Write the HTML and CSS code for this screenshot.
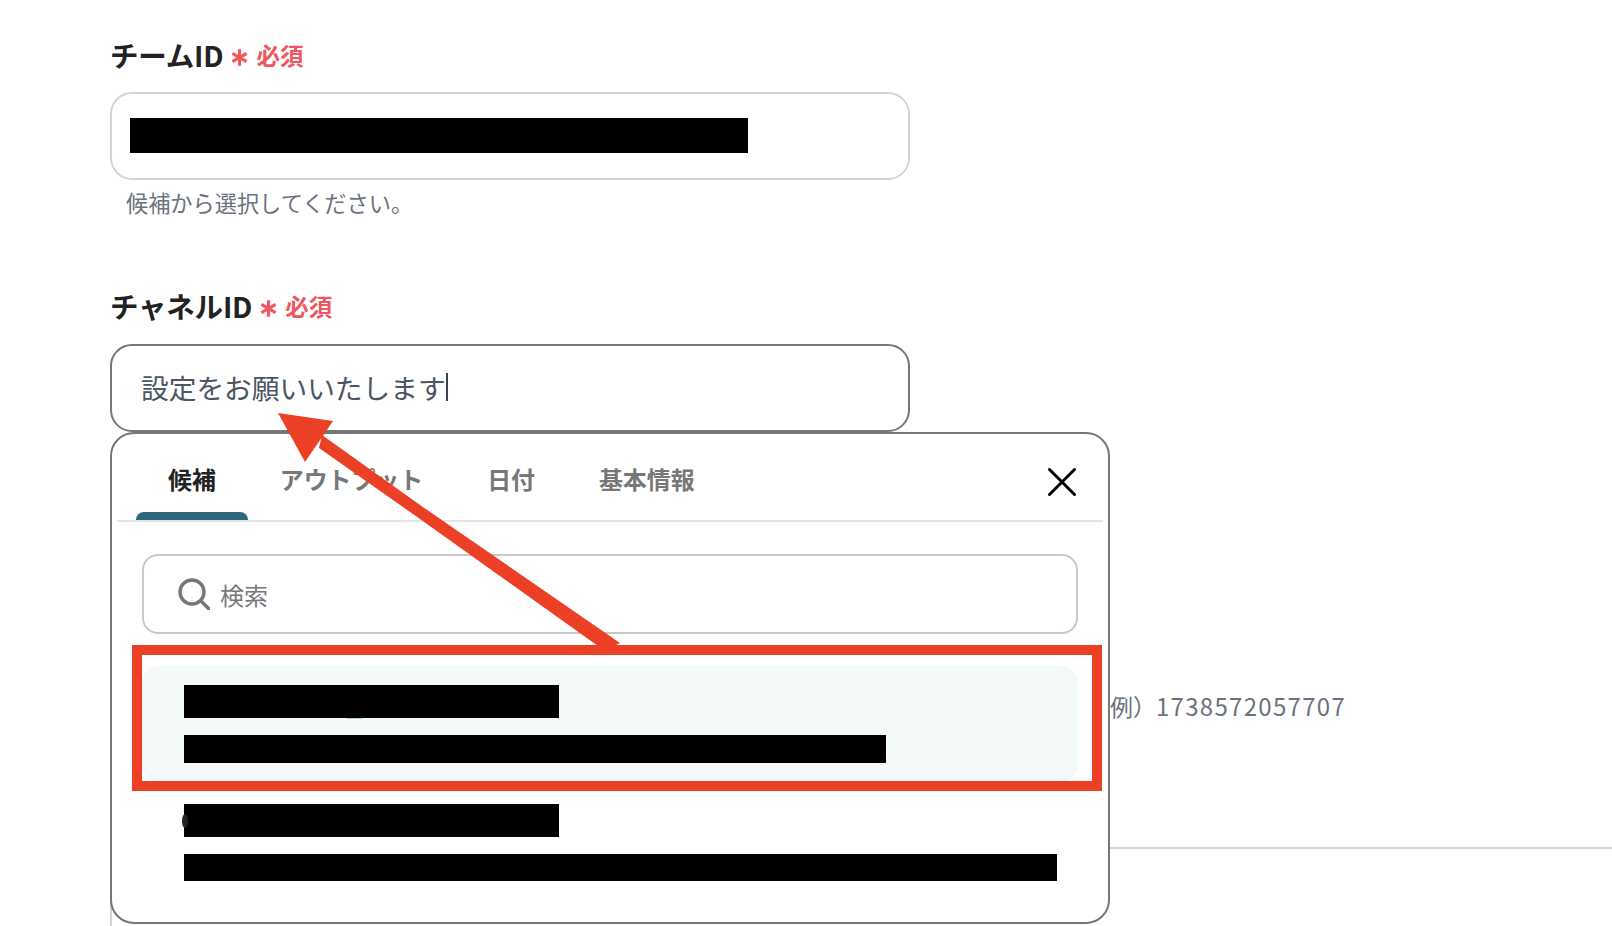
FILE: index.html
```html
<!DOCTYPE html>
<html lang="ja">
<head>
<meta charset="utf-8">
<title>チャネルID</title>
<link rel="stylesheet" href="styles.css">
</head>
<body>
<main class="page">
  <section class="field">
    <div class="label"><span>チームID</span>
      <svg class="star" viewBox="0 0 16 16"><path d="M8 1v14M2 4.5l12 7M14 4.5l-12 7"/></svg>
      <span class="req">必須</span></div>
    <div class="box box-light"><div class="bar bar-team"></div></div>
    <p class="hint">候補から選択してください。</p>
  </section>
  <section class="field field-channel">
    <div class="label"><span>チャネルID</span>
      <svg class="star" viewBox="0 0 16 16"><path d="M8 1v14M2 4.5l12 7M14 4.5l-12 7"/></svg>
      <span class="req">必須</span></div>
    <div class="box box-dark"><span class="typed">設定をお願いいたします</span><i class="caret"></i></div>
  </section>
  <p class="example">例）<span class="digits">1738572057707</span></p>
  <hr class="rule">
  <div class="box box-next"></div>

  <div class="popup">
    <div class="tabs">
      <div class="tab tab-on">候補</div>
      <div class="tab">アウトプット</div>
      <div class="tab">日付</div>
      <div class="tab">基本情報</div>
      <svg class="close" viewBox="0 0 28 28"><path d="M1.5 1.5l25 25M26.5 1.5l-25 25"/></svg>
    </div>
    <div class="search">
      <svg class="glass" viewBox="0 0 32 32"><circle cx="14" cy="14" r="12"/><path d="M23 23l8 8"/></svg>
      <span>検索</span>
    </div>
    <div class="option option-on">
      <div class="bar bar-title bar-under"></div>
      <div class="bar bar-sub-a"></div>
    </div>
    <div class="option">
      <div class="bar bar-title bar-curl"></div>
      <div class="bar bar-sub-b"></div>
    </div>
  </div>

  <svg class="marks" viewBox="0 0 1612 926">
    <polygon points="420,505 620,643 605,651 420,519 319,448 322,435"/>
    <polygon points="278,413 333,421 305,462"/>
    <rect x="137" y="650" width="960" height="136"/>
  </svg>
</main>
</body>
</html>
```
FILE: styles.css
```css
* { box-sizing: border-box; }
html, body { margin: 0; background: #fff; }
body { font-family: "Noto Sans CJK JP", "Liberation Sans", sans-serif; }

.page {
  position: relative;
  width: 1612px;
  height: 926px;
  overflow: hidden;
  padding: 34px 0 0 110px;
}

.field-channel { margin-top: 66px; }

.label {
  display: flex;
  align-items: center;
  height: 40px;
  font-size: 28.5px;
  font-weight: 700;
  color: #222;
  letter-spacing: -0.2px;
}
.star {
  width: 19px;
  height: 19px;
  margin: 7px 7px 0 7px;
  fill: none;
  stroke: #f0565f;
  stroke-width: 2.6;
}
.req { font-size: 23.5px; color: #f0565f; letter-spacing: 0; margin-top: 2px; }

.box {
  display: flex;
  align-items: center;
  width: 800px;
  height: 88px;
  margin-top: 18px;
  background: #fff;
  border-radius: 22px;
}
.box-light { border: 2px solid #d1d5db; padding: 0 0 2px 18px; }
.box-dark { border: 2px solid #777; padding-left: 29px; margin-top: 19px; padding-bottom: 2px; }

.bar { position: relative; background: #000; }
.bar-team { width: 618px; height: 35px; }

.hint {
  margin: 5px 0 0 16px;
  font-size: 22.2px;
  line-height: 34px;
  color: #6b7280;
}

.typed { font-size: 27.7px; color: #4b5563; }
.caret { width: 2px; height: 28px; background: #374151; margin-left: 0; }

.example {
  margin: 257px 0 0 1000px;
  font-size: 23px;
  line-height: 34px;
  color: #6b7280;
  white-space: nowrap;
}
.digits { letter-spacing: 1.3px; font-size: 24px; }

.rule {
  width: 1502px;
  height: 2px;
  margin: 124px 0 0;
  border: 0;
  background: #d1d5db;
}
.box-next { border-left: 2px solid #d1d5db; margin-top: 40px; border-radius: 0; }

.popup {
  position: absolute;
  left: 110px;
  top: 432px;
  width: 1000px;
  height: 492px;
  padding: 0 5px;
  background: #fff;
  border: 2px solid #777;
  border-radius: 24px;
}

.tabs {
  display: flex;
  height: 88px;
  padding-left: 19px;
  border-bottom: 2px solid #e5e5e5;
}
.tab {
  position: relative;
  padding: 24px 32px 0;
  font-size: 23.9px;
  font-weight: 700;
  line-height: 42px;
  color: #777;
}
.tab-on { color: #222; }
.tab-on::after {
  content: "";
  position: absolute;
  left: 0;
  right: 0;
  bottom: 0;
  height: 8px;
  background: #2e6780;
  border-radius: 8px 8px 0 0;
}
.close {
  width: 28px;
  height: 28px;
  margin: 34px 27px 0 auto;
  fill: none;
  stroke: #000;
  stroke-width: 3;
  stroke-linecap: round;
}

.search {
  display: flex;
  align-items: center;
  gap: 10px;
  height: 80px;
  margin: 32px 25px 0;
  padding-left: 34px;
  border: 2px solid #c8c8c8;
  border-radius: 16px;
  font-size: 24px;
  color: #777;
}
.glass {
  width: 32px;
  height: 32px;
  fill: none;
  stroke: #777;
  stroke-width: 3.4;
  stroke-linecap: round;
}

.option {
  display: flex;
  flex-direction: column;
  gap: 17px;
  height: 115px;
  margin: 4px 25px 0 25px;
  padding: 19px 42px 0;
  border-radius: 16px;
}
.option-on { margin-top: 32px; background: #f3f9f9; }
.bar-title { width: 375px; height: 33px; flex: none; }
.bar-sub-a { width: 702px; height: 28px; flex: none; }
.bar-sub-b { width: 873px; height: 27px; flex: none; }
.bar-under::after {
  content: "";
  position: absolute;
  left: 163px;
  top: 33px;
  width: 15px;
  height: 1px;
  background: #a9cfe0;
}
.bar-curl::before {
  content: "";
  position: absolute;
  left: -2px;
  top: 10px;
  width: 6px;
  height: 14px;
  background: #222;
  border-radius: 50%;
}

.marks {
  position: absolute;
  left: 0;
  top: 0;
  width: 1612px;
  height: 926px;
  pointer-events: none;
}
.marks polygon { fill: #eb4025; }
.marks rect { fill: none; stroke: #eb4025; stroke-width: 10; }
```
